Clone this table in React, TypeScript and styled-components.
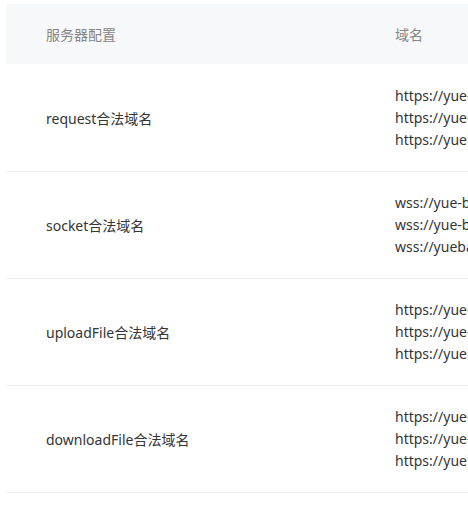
import React from "react";
import styled, { createGlobalStyle } from "styled-components";

const GlobalStyle = createGlobalStyle`
  body {
    margin: 0;
    background: #fff;
    font-family: "Noto Sans", "Noto Sans CJK SC", sans-serif;
    overflow: hidden;
  }
`;

const rows = [
  {
    name: "request合法域名",
    domains: [
      "https://yue-bang.example.com",
      "https://yue-bang-api.example.com",
      "https://yuebang.example.com",
    ],
  },
  {
    name: "socket合法域名",
    domains: [
      "wss://yue-bang.example.com",
      "wss://yue-bang-api.example.com",
      "wss://yuebang.example.com",
    ],
  },
  {
    name: "uploadFile合法域名",
    domains: [
      "https://yue-bang.example.com",
      "https://yue-bang-api.example.com",
      "https://yuebang.example.com",
    ],
  },
  {
    name: "downloadFile合法域名",
    domains: [
      "https://yue-bang.example.com",
      "https://yue-bang-api.example.com",
      "https://yuebang.example.com",
    ],
  },
];

export default function App() {
  return (
    <>
      <GlobalStyle />
      <Page>
        <Table>
          <HeadRow>
            <HeadCell>服务器配置</HeadCell>
            <HeadCell>域名</HeadCell>
          </HeadRow>
          {rows.map((row, i) => (
            <Row key={row.name} $first={i === 0}>
              <NameCell>{row.name}</NameCell>
              <DomainCell>
                {row.domains.map((d) => (
                  <Domain key={d}>{d}</Domain>
                ))}
              </DomainCell>
            </Row>
          ))}
        </Table>
      </Page>
    </>
  );
}

const Page = styled.div`
  padding: 4px 0 0 6px;
  width: 462px;
  overflow: hidden;
`;

const Table = styled.div`
  width: 640px;
  font-size: 14px;
`;

const HeadRow = styled.div`
  display: grid;
  grid-template-columns: 349px 1fr;
  height: 60px;
  align-items: center;
  background: #f6f8f9;
  color: #868686;
`;

const HeadCell = styled.div`
  padding-left: 40px;
`;

const Row = styled.div<{ $first?: boolean }>`
  display: grid;
  grid-template-columns: 349px 1fr;
  align-items: center;
  padding: ${(p) => (p.$first ? "21px" : "20px")} 0 20px;
  border-bottom: 1px solid #ececec;
  color: #353535;
`;

const NameCell = styled.div`
  padding-left: 40px;
`;

const DomainCell = styled.div`
  padding-left: 40px;
  display: flex;
  flex-direction: column;
`;

const Domain = styled.div`
  line-height: 22px;
  white-space: nowrap;
`;
